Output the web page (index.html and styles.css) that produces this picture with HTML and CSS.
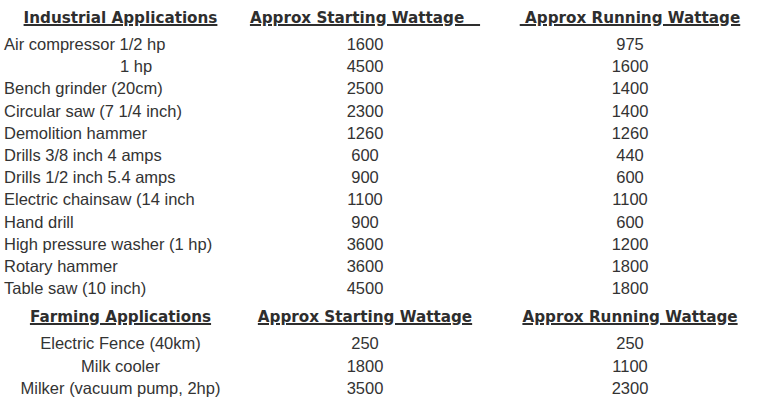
FILE: index.html
```html
<!DOCTYPE html>
<html>
<head>
<meta charset="utf-8">
<link rel="stylesheet" href="styles.css">
</head>
<body>
<div class="sheet">
  <div class="hrow first">
    <div class="h"><u>Industrial Applications</u></div>
    <div class="h"><u>Approx Starting Wattage&nbsp;&nbsp;&nbsp;</u></div>
    <div class="h"><u>&nbsp;Approx Running Wattage</u></div>
  </div>
  <div class="row"><div class="name">Air compressor 1/2 hp</div><div class="num">1600</div><div class="num">975</div></div>
  <div class="row"><div class="name indent">1 hp</div><div class="num">4500</div><div class="num">1600</div></div>
  <div class="row"><div class="name">Bench grinder (20cm)</div><div class="num">2500</div><div class="num">1400</div></div>
  <div class="row"><div class="name">Circular saw (7 1/4 inch)</div><div class="num">2300</div><div class="num">1400</div></div>
  <div class="row"><div class="name">Demolition hammer</div><div class="num">1260</div><div class="num">1260</div></div>
  <div class="row"><div class="name">Drills 3/8 inch 4 amps</div><div class="num">600</div><div class="num">440</div></div>
  <div class="row"><div class="name">Drills 1/2 inch 5.4 amps</div><div class="num">900</div><div class="num">600</div></div>
  <div class="row"><div class="name">Electric chainsaw (14 inch</div><div class="num">1100</div><div class="num">1100</div></div>
  <div class="row"><div class="name">Hand drill</div><div class="num">900</div><div class="num">600</div></div>
  <div class="row"><div class="name">High pressure washer (1 hp)</div><div class="num">3600</div><div class="num">1200</div></div>
  <div class="row"><div class="name">Rotary hammer</div><div class="num">3600</div><div class="num">1800</div></div>
  <div class="row"><div class="name">Table saw (10 inch)</div><div class="num">4500</div><div class="num">1800</div></div>
  <div class="hrow">
    <div class="h"><u>Farming Applications</u></div>
    <div class="h"><u>Approx Starting Wattage</u></div>
    <div class="h"><u>Approx Running Wattage</u></div>
  </div>
  <div class="row"><div class="name center">Electric Fence (40km)</div><div class="num">250</div><div class="num">250</div></div>
  <div class="row"><div class="name center">Milk cooler</div><div class="num">1800</div><div class="num">1100</div></div>
  <div class="row last"><div class="name center">Milker (vacuum pump, 2hp)</div><div class="num">3500</div><div class="num">2300</div></div>
</div>
</body>
</html>
```
FILE: styles.css
```css
html, body {
  margin: 0;
  padding: 0;
  background: #fff;
}
.sheet {
  width: 771px;
  color: #333;
  font-family: "Liberation Sans", Arial, sans-serif;
  font-size: 16.5px;
  line-height: 18px;
}
.hrow, .row {
  display: grid;
  grid-template-columns: 241px 248px 282px;
  align-items: center;
}
.hrow {
  height: 33px;
}
.row {
  height: 22.2px;
}
.h {
  text-align: center;
  font-family: "DejaVu Sans", Verdana, sans-serif;
  font-weight: bold;
  font-size: 15.2px;
  color: #2e2e2e;
  white-space: pre;
  padding-top: 2px;
}
.h u {
  text-decoration: underline;
  text-decoration-thickness: 2px;
  text-underline-offset: 1px;
}
.name {
  padding-left: 4px;
  white-space: nowrap;
}
.name.indent {
  padding-left: 120px;
}
.name.center {
  text-align: center;
  padding-left: 0;
}
.num {
  text-align: center;
}
```
